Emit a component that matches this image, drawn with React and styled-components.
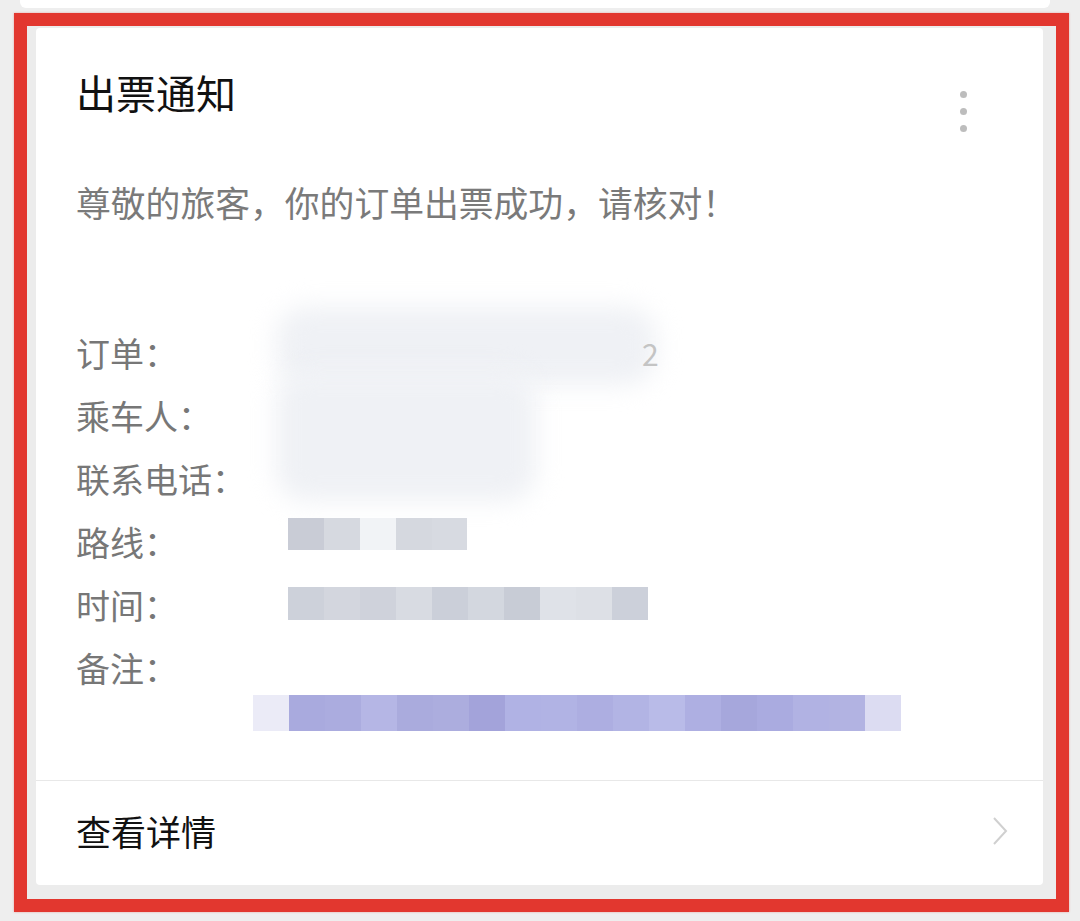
import React from "react";
import styled, { createGlobalStyle } from "styled-components";

const Global = createGlobalStyle`
  html, body { margin: 0; padding: 0; background: #ededed; }
  body { font-family: "Noto Sans CJK SC", "Noto Sans", sans-serif; }
  * { box-sizing: border-box; }
`;

const Page = styled.div`
  width: 1080px;
  height: 921px;
  overflow: hidden;
  background: #eeeeee;
`;

const PrevCard = styled.div`
  height: 8px;
  margin: 0 30px 0 20px;
  background: #fff;
  border-radius: 0 0 6px 6px;
`;

const Frame = styled.div`
  width: 1055px;
  margin: 5px 0 0 14px;
  border: 13px solid #e2372f;
  background: #ececec;
  padding: 2px 13px 14px 9px;
  box-shadow: 0 0 2px rgba(226, 55, 47, 0.4);
`;

const Card = styled.div`
  background: #fff;
  border-radius: 4px;
  height: 857px;
  display: flex;
  flex-direction: column;
`;

const Header = styled.div`
  display: flex;
  justify-content: space-between;
  align-items: flex-start;
  padding: 44px 76px 0 40px;
`;

const Title = styled.div`
  font-size: 40px;
  line-height: 40px;
  color: #111;
`;

const Dots = styled.div`
  display: flex;
  flex-direction: column;
  gap: 10px;
  margin-top: 19px;
`;

const Dot = styled.span`
  width: 7px;
  height: 7px;
  border-radius: 50%;
  background: #bdbdbd;
`;

const Greeting = styled.div`
  margin: 50px 0 0 40px;
  font-size: 34.8px;
  line-height: 40px;
  color: #7a7a7a;
`;

const Details = styled.div`
  position: relative;
  margin: 99px 0 0 40px;
  display: grid;
  grid-template-columns: 212px 1fr;
`;

const Label = styled.div`
  font-size: 34px;
  line-height: 63px;
  height: 63px;
  color: #777;
`;

const Value = styled.div`
  display: flex;
  align-items: ${(p) => p.$align || "center"};
  height: 63px;
  position: relative;
  z-index: 1;
`;

const FaintDigit = styled.span`
  margin-left: 354px;
  font-size: 30px;
  color: #c4c4c4;
`;

const Blob = styled.div`
  position: absolute;
  background: #eff1f5;
  filter: blur(12px);
  border-radius: 30px;
`;

const Pixels = styled.div`
  display: flex;
  height: ${(p) => p.$h}px;
  margin-left: ${(p) => p.$ml || 0}px;
  margin-top: ${(p) => p.$mt || 0}px;
`;

const Cell = styled.span`
  width: ${(p) => p.$w || 36}px;
  height: 100%;
  background: ${(p) => p.$c};
`;

const RemarkRow = styled.div`
  grid-column: 2;
  margin-top: -4px;
  position: relative;
  z-index: 1;
`;

const Divider = styled.div`
  margin-top: 49px;
  height: 1px;
  background: #e8e8e8;
`;

const Footer = styled.div`
  flex: 1;
  display: flex;
  align-items: center;
  justify-content: space-between;
  padding: 0 34px 4px 40px;
`;

const FooterText = styled.div`
  font-size: 35px;
  line-height: 40px;
  color: #111;
`;

const routeCells = ["#c9ccd6", "#d6d9e0", "#f1f3f6", "#d5d8df", "#d7dae1"];
const timeCells = ["#cdd1da", "#d3d6de", "#cfd2db", "#d8dbe2", "#cbcfd9", "#d3d7df", "#c8ccd6", "#dfe2e8", "#dde0e6", "#ccd0da"];
const remarkCells = [
  "#ebebf7", "#a9aade", "#abacdf", "#b5b6e5", "#aaabdd", "#acadde", "#a3a3da",
  "#b0b2e4", "#b1b3e4", "#adaee1", "#b2b4e4", "#b9bbe8", "#aeafe2", "#a6a7dc",
  "#aaabe0", "#b1b2e3", "#b2b3e2", "#dcdcf2",
];

export default function App() {
  return (
    <Page>
      <Global />
      <PrevCard />
      <Frame>
        <Card>
          <Header>
            <Title>出票通知</Title>
            <Dots>
              <Dot />
              <Dot />
              <Dot />
            </Dots>
          </Header>
          <Greeting>尊敬的旅客，你的订单出票成功，请核对！</Greeting>
          <Details>
            <Blob style={{ left: 200, top: -14, width: 380, height: 78 }} />
            <Blob style={{ left: 200, top: 50, width: 260, height: 130 }} />
            <Label>订单：</Label>
            <Value>
              <FaintDigit>2</FaintDigit>
            </Value>
            <Label>乘车人：</Label>
            <Value />
            <Label>联系电话：</Label>
            <Value />
            <Label>路线：</Label>
            <Value $align="flex-start">
              <Pixels $h={32} $mt={8}>
                {routeCells.map((c, i) => (
                  <Cell key={i} $c={c} $w={i === 4 ? 35 : 36} />
                ))}
              </Pixels>
            </Value>
            <Label>时间：</Label>
            <Value $align="flex-start">
              <Pixels $h={33} $mt={14}>
                {timeCells.map((c, i) => (
                  <Cell key={i} $c={c} />
                ))}
              </Pixels>
            </Value>
            <Label>备注：</Label>
            <Value />
            <RemarkRow>
              <Pixels $h={36} $ml={-35}>
                {remarkCells.map((c, i) => (
                  <Cell key={i} $c={c} />
                ))}
              </Pixels>
            </RemarkRow>
          </Details>
          <Divider />
          <Footer>
            <FooterText>查看详情</FooterText>
            <svg width="18" height="32" viewBox="0 0 18 32" fill="none">
              <path d="M3 3 L15 16 L3 29" stroke="#d0d0d0" strokeWidth="2" />
            </svg>
          </Footer>
        </Card>
      </Frame>
    </Page>
  );
}
